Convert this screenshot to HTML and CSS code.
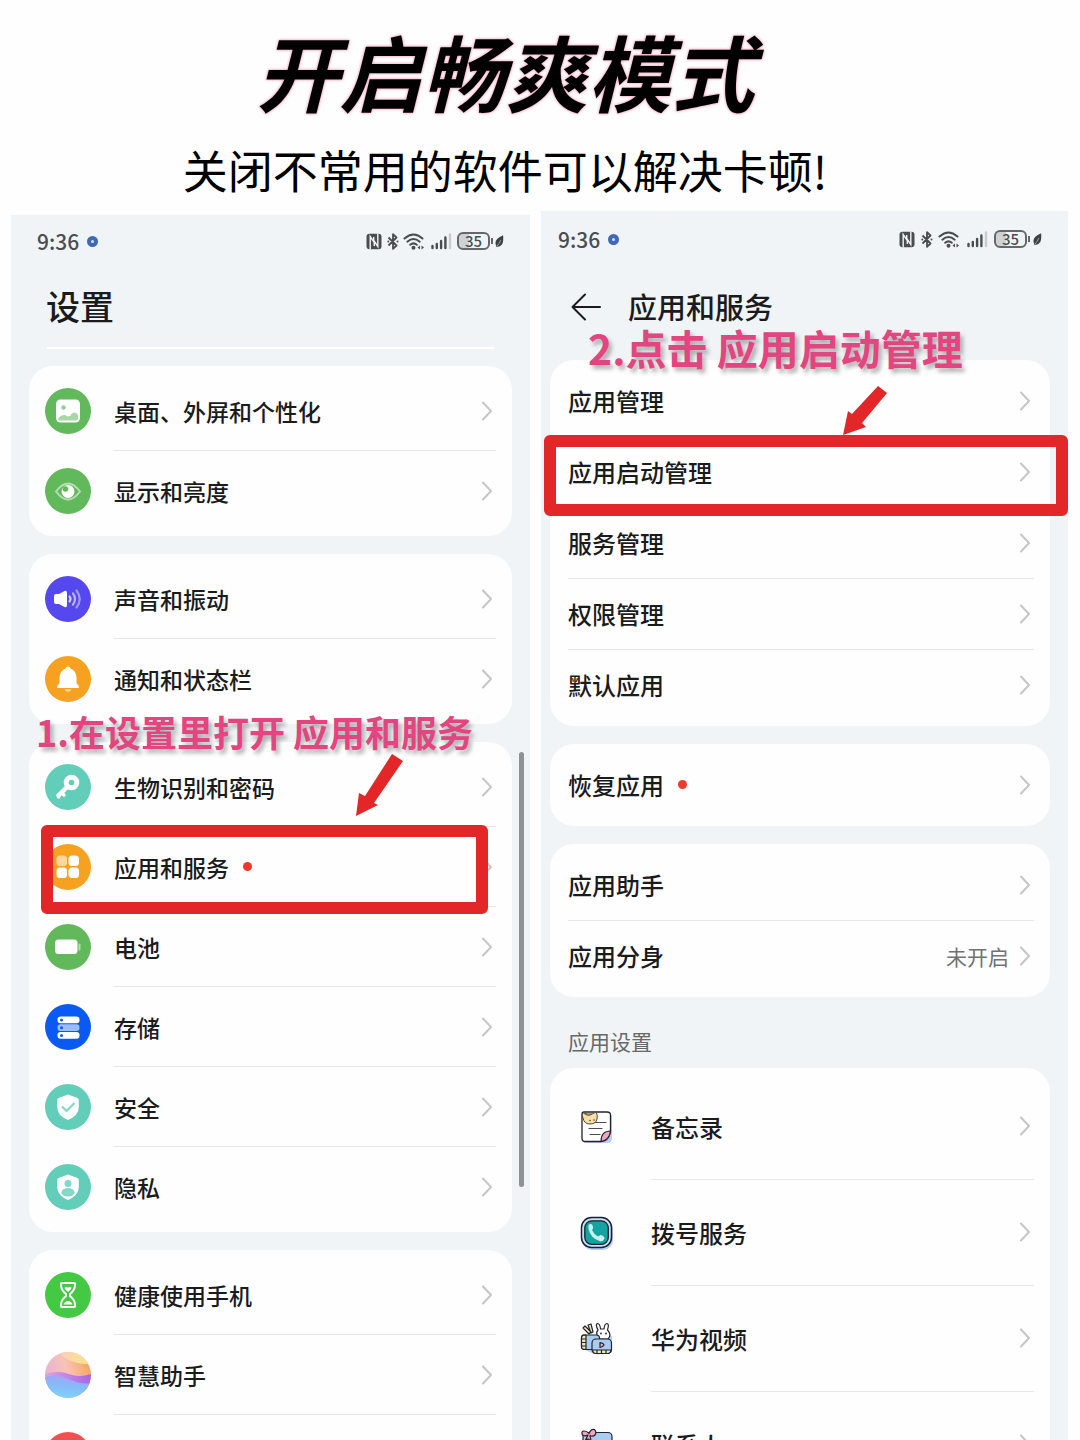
FILE: index.html
```html
<!DOCTYPE html>
<html lang="zh-CN">
<head>
  <meta charset="UTF-8" />
  <meta name="viewport" content="width=device-width, initial-scale=1.0"/>
  <title>开启畅爽模式</title>
  <link rel="stylesheet" href="styles.css">
</head>
<body>

  <!-- shared icons -->
  <svg class="sprite" aria-hidden="true">
    <symbol id="chevron" viewBox="0 0 10 20">
      <path d="M1 1.500L9 10L1 18.500" fill="none" stroke="#c6c6c8" stroke-width="2" stroke-linecap="round" stroke-linejoin="round"/>
    </symbol>
    <symbol id="nfc" viewBox="0 0 16 17">
      <rect x="0.500" y="0.800" width="15" height="15.500" rx="3" fill="#4a4d4f"/>
      <path d="M4.200 16.500V3.500L8.300 9.500V13M11.800 0.500V13.500L7.700 7.500V4" fill="none" stroke="#f1f4f6" stroke-width="1.400"/>
    </symbol>
    <symbol id="bluetooth" viewBox="0 0 12 17">
      <path d="M1.500 4.500L9.500 12.500L6 15.800V1.200L9.500 4.500L1.500 12.500" fill="none" stroke="#4a4d4f" stroke-width="1.800" stroke-linejoin="round"/>
      <circle cx="10.500" cy="8.500" r="1" fill="#4a4d4f"/><circle cx="1.300" cy="8.500" r="1" fill="#4a4d4f"/>
    </symbol>
    <symbol id="wifi" viewBox="0 0 22 17">
      <g fill="none" stroke="#4a4d4f" stroke-width="2" stroke-linecap="round">
        <path d="M1.500 5.500Q10.500 -2.500 19.500 5.500"/>
        <path d="M4.300 8.700Q10.500 3.200 16.700 8.700"/>
        <path d="M7.200 11.800Q10.500 9 13.800 11.800"/>
      </g>
      <circle cx="10.500" cy="14.700" r="2" fill="#4a4d4f"/>
      <path d="M17 12.500L14.500 14.500L17 16.500ZM18.500 12.500L21 14.500L18.500 16.500Z" fill="#4a4d4f"/>
    </symbol>
    <symbol id="signal" viewBox="0 0 21 17">
      <g stroke="#4a4d4f" stroke-width="2.400" stroke-linecap="round">
        <path d="M1.500 13V15M5.800 11V15M10.100 8V15M14.400 4.500V15"/>
        <path d="M19 1.500V15" stroke="#c9cbcd"/>
      </g>
    </symbol>
    <symbol id="leaf" viewBox="0 0 10 14">
      <path d="M9 0.500Q0.500 4 0.500 9Q0.500 11 1.500 12.500L1 14L2.500 13.500Q8 13 9 7.500Q9.500 4 9 0.500Z" fill="#3f4244"/>
      <path d="M2 13Q5 10 6.500 6" stroke="#f1f4f6" stroke-width="0.600" fill="none"/>
    </symbol>
  </svg>

  <main class="page">
    <header class="intro">
      <h1>开启畅爽模式</h1>
      <p>关闭不常用的软件可以解决卡顿!</p>
    </header>

    <div class="phones">

      <!-- step 1: settings -->
      <section class="phone phone-settings">
        <div class="status">
          <span class="time">9:36</span>
          <i class="rec"></i>
          <div class="status-icons">
            <svg width="16" height="17"><use href="#nfc"/></svg>
            <svg width="12" height="17"><use href="#bluetooth"/></svg>
            <svg class="wifi" width="22" height="17"><use href="#wifi"/></svg>
            <svg width="21" height="17"><use href="#signal"/></svg>
            <span class="battery">35</span>
            <svg width="9" height="14"><use href="#leaf"/></svg>
          </div>
        </div>
        <h2 class="title">设置</h2>
        <hr class="rule">

        <ul class="card">
          <li class="row">
            <a href="#">
              <svg class="icon" viewBox="0 0 46 46">
                <circle cx="23" cy="23" r="23" fill="#61b95b"/>
                <rect x="11" y="11.500" width="24" height="23" rx="4.500" fill="#fff"/>
                <circle cx="18.500" cy="19.500" r="2.200" fill="#8fce8b"/>
                <path d="M13.500 32.500V30Q18 25 22.500 28.500Q25 29 27 25.500Q30 23 33 27V30.500Q33 32.500 31 32.500Z" fill="#a5d8a2"/>
              </svg>
              <span class="label">桌面、外屏和个性化<svg class="chevron"><use href="#chevron"/></svg></span>
            </a>
          </li>
          <li class="row">
            <a href="#">
              <svg class="icon" viewBox="0 0 46 46">
                <circle cx="23" cy="23" r="23" fill="#61b95b"/>
                <path d="M11 23.500Q23 7.500 35 23.500Q23 39.500 11 23.500Z" fill="none" stroke="#b4deb2" stroke-width="2"/>
                <circle cx="23" cy="23.500" r="6.500" fill="#fff"/>
                <circle cx="20.500" cy="21" r="2.800" fill="#61b95b"/>
              </svg>
              <span class="label">显示和亮度<svg class="chevron"><use href="#chevron"/></svg></span>
            </a>
          </li>
        </ul>

        <ul class="card">
          <li class="row">
            <a href="#">
              <svg class="icon" viewBox="0 0 46 46">
                <circle cx="23" cy="23" r="23" fill="#5548ee"/>
                <path d="M11 18H14L19.500 15Q22 14 22 17V29Q22 32 19.500 31L14 28H11Q9 28 9 26V20Q9 18 11 18Z" fill="#fff"/>
                <g fill="none" stroke-width="2.200" stroke-linecap="round">
                  <path d="M24.500 20.500Q26.500 23 24.500 25.500" stroke="#d3cffb"/>
                  <path d="M28 17.500Q32 23 28 28.500" stroke="#bbb5f8"/>
                  <path d="M31.500 14.500Q38 23 31.500 31.500" stroke="#a39bf5"/>
                </g>
              </svg>
              <span class="label">声音和振动<svg class="chevron"><use href="#chevron"/></svg></span>
            </a>
          </li>
          <li class="row">
            <a href="#">
              <svg class="icon" viewBox="0 0 46 46">
                <circle cx="23" cy="23" r="23" fill="#f6a11f"/>
                <path d="M23 10.500Q25 10.500 25.500 12.500Q31.500 15 31.500 22V27L34 30.500Q34.500 32 33 32H13Q11.500 32 12 30.500L14.500 27V22Q14.500 15 20.500 12.500Q21 10.500 23 10.500Z" fill="#fff"/>
                <path d="M19.500 33.200H26.500Q25.500 36 23 36Q20.500 36 19.500 33.200Z" fill="#fbd79f"/>
              </svg>
              <span class="label">通知和状态栏<svg class="chevron"><use href="#chevron"/></svg></span>
            </a>
          </li>
        </ul>

        <ul class="card">
          <li class="row">
            <p class="step step-one">1.在设置里打开 应用和服务</p>
            <a href="#">
              <svg class="icon" viewBox="0 0 46 46">
                <circle cx="23" cy="23" r="23" fill="#62cdb9"/>
                <path d="M22.500 22.500L13.500 31.500" stroke="#fff" stroke-width="4.500" stroke-linecap="round"/>
                <path d="M13.500 30.500V33M17 29L19 31" stroke="#fff" stroke-width="3.500" stroke-linecap="round"/>
                <circle cx="26.500" cy="18.500" r="5.300" fill="none" stroke="#fff" stroke-width="5"/>
              </svg>
              <span class="label">生物识别和密码<svg class="chevron"><use href="#chevron"/></svg></span>
            </a>
          </li>
          <li class="row">
            <a href="#">
              <svg class="icon" viewBox="0 0 46 46">
                <circle cx="23" cy="23" r="23" fill="#f6a11f"/>
                <g fill="#fff">
                  <rect x="11.500" y="11.500" width="10.500" height="10.500" rx="3.500" fill="#fbd79f"/>
                  <rect x="23.500" y="11.500" width="10.500" height="10.500" rx="3.500"/>
                  <rect x="11.500" y="23.500" width="10.500" height="10.500" rx="3.500"/>
                  <rect x="23.500" y="23.500" width="10.500" height="10.500" rx="3.500"/>
                </g>
              </svg>
              <span class="label">应用和服务<i class="dot"></i><svg class="chevron"><use href="#chevron"/></svg></span>
            </a>
            <div class="marker marker-one"></div>
            <svg class="arrow arrow-one" viewBox="0 0 47 62">
              <path d="M36 0L47 7L18 49L22 51L0 62L3 39L9 42Z" fill="#e32628"/>
            </svg>
          </li>
          <li class="row">
            <a href="#">
              <svg class="icon" viewBox="0 0 46 46">
                <circle cx="23" cy="23" r="23" fill="#61b95b"/>
                <rect x="10" y="15.500" width="22.500" height="14.500" rx="3.500" fill="#fff"/>
                <path d="M34.500 20.500V25.500" stroke="#b4deb2" stroke-width="2" stroke-linecap="round"/>
              </svg>
              <span class="label">电池<svg class="chevron"><use href="#chevron"/></svg></span>
            </a>
          </li>
          <li class="row">
            <a href="#">
              <svg class="icon" viewBox="0 0 46 46">
                <circle cx="23" cy="23" r="23" fill="#0a59f2"/>
                <rect x="12.500" y="12.500" width="22" height="6.800" rx="3" fill="#fff"/>
                <rect x="12.500" y="20.300" width="22" height="6.800" rx="3" fill="#9dbdfa"/>
                <rect x="12.500" y="28" width="22" height="6.800" rx="3" fill="#fff"/>
                <g fill="#0a59f2">
                  <circle cx="16.500" cy="15.900" r="1.500"/><circle cx="16.500" cy="23.700" r="1.500"/><circle cx="16.500" cy="31.400" r="1.500"/>
                </g>
              </svg>
              <span class="label">存储<svg class="chevron"><use href="#chevron"/></svg></span>
            </a>
          </li>
          <li class="row">
            <a href="#">
              <svg class="icon" viewBox="0 0 46 46">
                <circle cx="23" cy="23" r="23" fill="#62cdb9"/>
                <path d="M23 10.500L32 13.800Q33.800 14.500 33.800 16V23Q33.800 31.500 23 36Q12.200 31.500 12.200 23V16Q12.200 14.500 14 13.800Z" fill="#fff"/>
                <path d="M17 22.500L21.500 27L29.500 19" fill="none" stroke="#84d8c8" stroke-width="2.200"/>
              </svg>
              <span class="label">安全<svg class="chevron"><use href="#chevron"/></svg></span>
            </a>
          </li>
          <li class="row">
            <a href="#">
              <svg class="icon" viewBox="0 0 46 46">
                <circle cx="23" cy="23" r="23" fill="#62cdb9"/>
                <path d="M23 10.500L32 13.800Q33.800 14.500 33.800 16V23Q33.800 31.500 23 36Q12.200 31.500 12.200 23V16Q12.200 14.500 14 13.800Z" fill="#fff"/>
                <circle cx="23" cy="19.500" r="3.500" fill="#84d8c8"/>
                <ellipse cx="23" cy="28.300" rx="6.500" ry="4.300" fill="#84d8c8"/>
              </svg>
              <span class="label">隐私<svg class="chevron"><use href="#chevron"/></svg></span>
            </a>
          </li>
        </ul>

        <ul class="card">
          <li class="row">
            <a href="#">
              <svg class="icon" viewBox="0 0 46 46">
                <circle cx="23" cy="23" r="23" fill="#43c944"/>
                <path d="M17 11H29Q30.500 11 30 13Q30 18 25 22V24Q30 28 30 33Q30.500 35 29 35H17Q15.500 35 16 33Q16 28 21 24V22Q16 18 16 13Q15.500 11 17 11Z" fill="none" stroke="#fff" stroke-width="2"/>
                <path d="M23 20L19.800 17Q19 15 21 14.800Q22.500 14.800 23 16Q23.500 14.800 25 14.800Q27 15 26.200 17ZM18.500 32.500Q19 29.500 23 29Q27 29.500 27.500 32.500Z" fill="#fff"/>
              </svg>
              <span class="label">健康使用手机<svg class="chevron"><use href="#chevron"/></svg></span>
            </a>
          </li>
          <li class="row">
            <a href="#">
              <svg class="icon" viewBox="0 0 46 46">
                <defs>
                  <linearGradient id="orb-top" x1="0" y1="0.600" x2="1" y2="0.300">
                    <stop offset="0" stop-color="#e6b0d6"/><stop offset="0.500" stop-color="#f7c3b8"/><stop offset="1" stop-color="#f9a458"/>
                  </linearGradient>
                  <linearGradient id="orb-sun" x1="0" y1="0" x2="1" y2="0">
                    <stop offset="0" stop-color="#f7cfc0"/><stop offset="0.600" stop-color="#fbdc98"/>
                  </linearGradient>
                  <linearGradient id="orb-mid" x1="0" y1="0" x2="1" y2="0">
                    <stop offset="0" stop-color="#dca2e0"/><stop offset="1" stop-color="#a765ea"/>
                  </linearGradient>
                  <linearGradient id="orb-low" x1="0.600" y1="0" x2="0.400" y2="1">
                    <stop offset="0" stop-color="#a9a0f5"/><stop offset="0.500" stop-color="#84bcf8"/><stop offset="1" stop-color="#7fd3fa"/>
                  </linearGradient>
                  <clipPath id="orb"><circle cx="23" cy="23" r="23"/></clipPath>
                </defs>
                <g clip-path="url(#orb)">
                  <rect width="46" height="46" fill="url(#orb-top)"/>
                  <path d="M14 0Q24 13 46 12V0Z" fill="url(#orb-sun)"/>
                  <path d="M0 22Q14 18 24 22T46 22V40H0Z" fill="url(#orb-mid)"/>
                  <path d="M0 25Q12 21 24 27T46 31V46H0Z" fill="url(#orb-low)"/>
                </g>
              </svg>
              <span class="label">智慧助手<svg class="chevron"><use href="#chevron"/></svg></span>
            </a>
          </li>
          <li class="row">
            <a href="#">
              <svg class="icon" viewBox="0 0 46 46"><circle cx="23" cy="23" r="23" fill="#f25050"/></svg>
              <span class="label"></span>
            </a>
          </li>
        </ul>

        <div class="scrollbar"></div>
      </section>

      <!-- step 2: apps and services -->
      <section class="phone phone-apps">
        <div class="status">
          <span class="time">9:36</span>
          <i class="rec"></i>
          <div class="status-icons">
            <svg width="16" height="17"><use href="#nfc"/></svg>
            <svg width="12" height="17"><use href="#bluetooth"/></svg>
            <svg class="wifi" width="22" height="17"><use href="#wifi"/></svg>
            <svg width="21" height="17"><use href="#signal"/></svg>
            <span class="battery">35</span>
            <svg width="9" height="14"><use href="#leaf"/></svg>
          </div>
        </div>
        <div class="title-bar">
          <button class="back" aria-label="返回">
            <svg width="30" height="28" viewBox="0 0 30 28">
              <path d="M14 1.500L1.500 14L14 26.500M1.500 14H29" fill="none" stroke="#1a1b1c" stroke-width="2" stroke-linecap="round" stroke-linejoin="round"/>
            </svg>
          </button>
          <h2 class="title">应用和服务</h2>
          <p class="step step-two">2.点击 应用启动管理</p>
        </div>

        <ul class="card">
          <li class="row"><a href="#"><span class="label">应用管理<svg class="chevron"><use href="#chevron"/></svg></span></a></li>
          <li class="row">
            <a href="#"><span class="label">应用启动管理<svg class="chevron"><use href="#chevron"/></svg></span></a>
            <div class="marker marker-two"></div>
            <svg class="arrow arrow-two" viewBox="0 0 44 49">
              <path d="M35 0L44 7L19 37L23 41L0 49L5 25L9 28Z" fill="#e32628"/>
            </svg>
          </li>
          <li class="row"><a href="#"><span class="label">服务管理<svg class="chevron"><use href="#chevron"/></svg></span></a></li>
          <li class="row"><a href="#"><span class="label">权限管理<svg class="chevron"><use href="#chevron"/></svg></span></a></li>
          <li class="row"><a href="#"><span class="label">默认应用<svg class="chevron"><use href="#chevron"/></svg></span></a></li>
        </ul>

        <ul class="card">
          <li class="row"><a href="#"><span class="label">恢复应用<i class="dot"></i><svg class="chevron"><use href="#chevron"/></svg></span></a></li>
        </ul>

        <ul class="card">
          <li class="row"><a href="#"><span class="label">应用助手<svg class="chevron"><use href="#chevron"/></svg></span></a></li>
          <li class="row"><a href="#"><span class="label">应用分身<span class="value">未开启</span><svg class="chevron"><use href="#chevron"/></svg></span></a></li>
        </ul>

        <h3 class="group">应用设置</h3>

        <ul class="card apps">
          <li class="row">
            <a href="#">
              <svg class="icon" viewBox="0 0 34 34">
                <path d="M5 4H29Q32 4 32 7V28Q32 33 27 33H6Q3 33 3 30Z" fill="#b9cdf5"/>
                <path d="M4 2H27Q30.500 2 30.500 5V22Q28 31.500 21 31.500H5Q2 31.500 2 28.500V4Q2 2 4 2Z" fill="#fff" stroke="#22242c" stroke-width="1.300"/>
                <path d="M21 31.500Q21 21 30.500 21Q29.500 30 21 31.500Z" fill="#f2a5bd" stroke="#22242c" stroke-width="1.100"/>
                <path d="M13 12.500H26M9 18.500H22M10 24.500H20" stroke="#4a4c55" stroke-width="1.200" stroke-linecap="round"/>
                <path d="M3 8Q1 3 4 2.500L7 4H12L16 2Q18 5 17 9Q16 14 10 14Q4 14 3 8Z" fill="#f6dfa8" stroke="#4c4332" stroke-width="1"/>
                <path d="M3.500 3Q8 7 12 4" fill="none" stroke="#4c4332" stroke-width="0.900"/>
                <circle cx="10" cy="10.500" r="0.800" fill="#4c4332"/><circle cx="14" cy="10" r="0.800" fill="#4c4332"/>
              </svg>
              <span class="label">备忘录<svg class="chevron"><use href="#chevron"/></svg></span>
            </a>
          </li>
          <li class="row">
            <a href="#">
              <svg class="icon" viewBox="0 0 34 34">
                <rect x="2" y="3" width="31" height="31" rx="10" fill="#b9cdf5"/>
                <rect x="1.500" y="1.500" width="30" height="30" rx="10" fill="#c9e0f7" stroke="#15222f" stroke-width="1.500"/>
                <rect x="4.800" y="4.800" width="23.500" height="23.500" rx="7" fill="#14a3a0" stroke="#15222f" stroke-width="1.300"/>
                <path d="M8.500 10Q8.500 7.500 11 8Q13.500 9.500 13 12.500L12 14Q14 18.500 18 20.500L20.500 19Q24.500 20 24.500 22.500Q23 26 19.500 25Q10.500 22 8.500 13Z" fill="#c8f2ee"/>
              </svg>
              <span class="label">拨号服务<svg class="chevron"><use href="#chevron"/></svg></span>
            </a>
          </li>
          <li class="row">
            <a href="#">
              <svg class="icon" viewBox="0 0 34 34">
                <path d="M3 14H32V30Q30 33 14 32L3 27Z" fill="#b9cdf5"/>
                <g stroke="#23252e" stroke-width="1.200" stroke-linejoin="round">
                  <path d="M9 12L3 6L5 4L11 10ZM11 11L8 3L11 2L13 10Z" fill="#f3e9b4"/>
                  <path d="M17 13Q16 10 18 8Q15 2 17.500 1.500Q20 1.500 20.500 7H24Q24.500 1.500 27 1.500Q29.500 2 27.500 8Q32 13 28 17H18Z" fill="#fff"/>
                  <rect x="1.500" y="13" width="18" height="14.500" rx="3" fill="#a9cdf0"/>
                  <path d="M3.500 13.200H6V27.300H3.500Q1.500 27 1.500 24.500V16Q1.500 13.500 3.500 13.200Z" fill="#f3e9b4"/>
                  <path d="M1.500 17H6M1.500 20.500H6M1.500 24H6" fill="none"/>
                  <rect x="12" y="17" width="19.500" height="14.500" rx="4" fill="#a9cdf0"/>
                  <path d="M12.500 28H31Q30.500 31.500 27.500 31.500H16Q13 31.500 12.500 28Z" fill="#f3e9b4"/>
                  <path d="M17 28V31.500M21.500 28V31.500M26 28V31.500" fill="none"/>
                  <path d="M20 20.500Q24 21.500 24 23Q23.500 24.500 20 25.500Z" fill="#f2a5bd"/>
                </g>
                <circle cx="21" cy="11.500" r="0.900" fill="#23252e"/><circle cx="26" cy="11.500" r="0.900" fill="#23252e"/>
              </svg>
              <span class="label">华为视频<svg class="chevron"><use href="#chevron"/></svg></span>
            </a>
          </li>
          <li class="row">
            <a href="#">
              <svg class="icon" viewBox="0 0 34 34">
                <g stroke="#23252e" stroke-width="1.200" stroke-linejoin="round">
                  <rect x="3" y="4.500" width="29" height="28" rx="4" fill="#a9cdf0"/>
                  <path d="M8 7Q3 9 2 6Q1.500 3 4 3Q7 3 9 5.500Q11 0.500 14.500 1.500Q17 4 15 7Q13 9 10 7.500L11 13L8 11L5 13Z" fill="#f2a5bd"/>
                </g>
              </svg>
              <span class="label">联系人<svg class="chevron"><use href="#chevron"/></svg></span>
            </a>
          </li>
        </ul>
      </section>

    </div>
  </main>

</body>
</html>
```
FILE: styles.css
```css
* {
  box-sizing: border-box;
}

body {
  margin: 0;
  font-family: 'Noto Sans CJK SC', sans-serif;
  font-weight: 500;
  background-color: #fefefe;
  color: #1a1b1c;
}

h1, h2, h3, p, ul {
  margin: 0;
  padding: 0;
  font-weight: 500;
}

ul {
  list-style: none;
}

a {
  color: inherit;
  text-decoration: none;
}

svg {
  display: block;
}

.sprite {
  display: none;
}

.page {
  display: flex;
  flex-direction: column;
  height: 100vh;
  overflow: hidden;
}

/* heading */

.intro {
  flex: none;
  padding: 18px 70px 5px 0;
  text-align: center;
  color: #000;
}

.intro h1 {
  margin-bottom: 12px;
  font-size: 83px;
  line-height: 104px;
  font-weight: bold;
  font-style: italic;
  text-shadow: 0 0 3px #f5a9c4, 0 0 3px #f5a9c4;
}

.intro p {
  font-size: 45px;
  font-weight: normal;
  line-height: 72px;
}

/* phones */

.phones {
  display: grid;
  grid-template-columns: 519fr 527fr;
  gap: 11px;
  padding: 0 12px 0 11px;
}

.phone {
  position: relative;
  background-color: #f1f4f6;
}

.phone-settings {
  margin-top: 4px;
  padding: 0 18px;
}

.phone-apps {
  padding: 0 18px 0 9px;
}

.status {
  display: flex;
  align-items: center;
  height: 52px;
  padding: 0 8px;
  color: #4a4d4f;
}

.phone-apps .status {
  height: 56px;
}

.time {
  font-size: 21px;
  line-height: 24px;
}

.rec {
  width: 11px;
  height: 11px;
  margin-left: 8px;
  border: 4px solid #4069b4;
  border-radius: 50%;
  background-color: #cfe0ff;
}

.status-icons {
  display: flex;
  align-items: center;
  gap: 5px;
  margin-left: auto;
}

.phone-apps .status-icons {
  gap: 6px;
}

.wifi {
  margin: 0 1px 0 -1px;
}

.battery {
  position: relative;
  width: 33px;
  height: 18px;
  border: 2px solid #65686a;
  border-radius: 6px;
  background: linear-gradient(90deg, #cfd1d3 35%, transparent 35%);
  font-size: 15px;
  line-height: 14px;
  text-align: center;
}

.battery::after {
  content: "";
  position: absolute;
  top: 4px;
  right: -5px;
  width: 2px;
  height: 6px;
  background-color: #65686a;
}

.title {
  font-size: 29px;
  line-height: 78px;
  padding-bottom: 2px;
}

.phone-settings .title {
  padding-left: 17px;
  font-size: 34px;
}

.title-bar {
  position: relative;
  display: flex;
  align-items: center;
  gap: 27px;
  padding-left: 21px;
  margin-bottom: 13px;
}

.back {
  padding: 0;
  border: none;
  background: none;
  cursor: pointer;
}

.rule {
  height: 2px;
  margin: 0 18px 17px;
  border: none;
  background-color: #fff;
}

/* lists */

.card {
  margin-bottom: 18px;
  padding: 5px 0;
  border-radius: 24px;
  background-color: #fefefe;
}

.phone-apps .card {
  padding-top: 6px;
}

.row {
  position: relative;
}

.row a {
  display: flex;
  align-items: center;
  gap: 23px;
  height: 80px;
  padding: 0 16px;
}

.phone-apps .row a {
  height: 71px;
  padding: 0 16px 0 18px;
}

.icon {
  flex: none;
  width: 46px;
  height: 46px;
}

.label {
  display: flex;
  align-items: center;
  flex: 1;
  height: 100%;
  padding-right: 4px;
  border-bottom: 1px solid #e6e7e8;
  font-size: 23px;
}

.phone-apps .label {
  padding-bottom: 1px;
  font-size: 24px;
}

.row:last-child .label {
  border-bottom-color: transparent;
}

.chevron {
  width: 10px;
  height: 20px;
  margin-left: auto;
}

.dot {
  width: 9px;
  height: 9px;
  margin-left: 14px;
  border-radius: 50%;
  background-color: #f03a2e;
}

.value {
  margin-left: auto;
  color: #707274;
  font-size: 21px;
  font-weight: normal;
}

.value + .chevron {
  margin-left: 11px;
}

.group {
  padding-left: 18px;
  color: #66686a;
  font-size: 21px;
  font-weight: normal;
  line-height: 53px;
}

.phone-apps .apps .row a {
  gap: 37px;
  height: 106px;
  padding-left: 30px;
}

.apps .icon {
  width: 34px;
  height: 34px;
}

.scrollbar {
  position: absolute;
  top: 537px;
  right: 6px;
  width: 5px;
  height: 435px;
  border-radius: 3px;
  background-color: #909292;
}

/* tutorial marks */

.step {
  position: absolute;
  z-index: 2;
  color: #e2457f;
  font-weight: bold;
  white-space: nowrap;
  text-shadow: 3px 4px 4px rgba(0, 0, 0, 0.3);
}

.step-one {
  top: -42px;
  left: 7px;
  font-size: 36px;
  line-height: 52px;
}

.step-two {
  top: 50px;
  left: 38px;
  font-size: 41px;
  line-height: 60px;
}

.marker {
  position: absolute;
  z-index: 1;
  border: 12px solid #e32628;
  border-radius: 6px;
}

.marker-one {
  top: -2px;
  right: 24px;
  bottom: -7px;
  left: 12px;
}

.marker-two {
  top: -2px;
  right: -18px;
  bottom: -8px;
  left: -6px;
}

.arrow {
  position: absolute;
  z-index: 1;
}

.arrow-one {
  top: -73px;
  right: 109px;
  width: 47px;
  height: 62px;
}

.arrow-two {
  top: -51px;
  right: 163px;
  width: 44px;
  height: 49px;
}
```
